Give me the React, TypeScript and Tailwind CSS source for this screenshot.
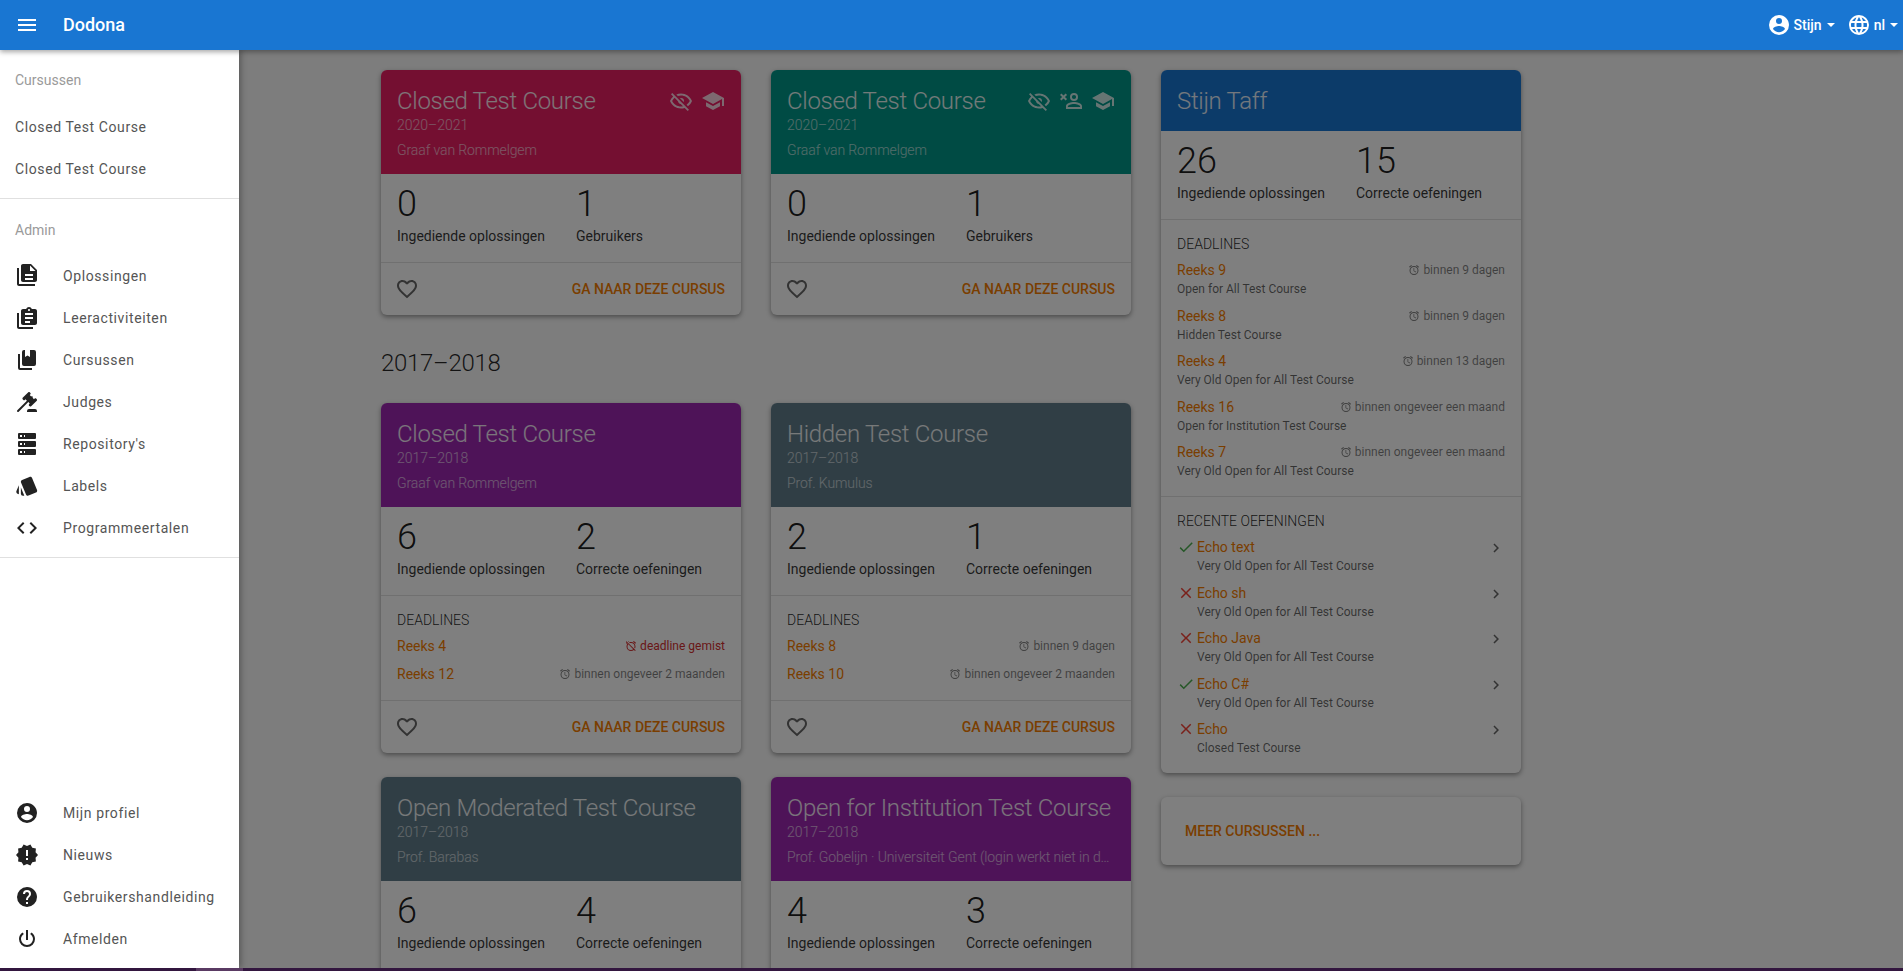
import type { ReactNode } from 'react';

const paths = {
	menu: 'M3,6H21V8H3V6M3,11H21V13H3V11M3,16H21V18H3V16Z',
	fileMultiple:
		'M16 0H8C6.9 0 6 .9 6 2V16C6 17.1 6.9 18 8 18H20C21.1 18 22 17.1 22 16V6L16 0M18 16H10V14H18V16M18 12H10V10H18V12M15 7V1.5L20.5 7H15M4 4V20H20V22H4C2.9 22 2 21.1 2 20V4H4Z',
	clipboardMultiple:
		'M4 7V21H18V23H4C2.9 23 2 22.1 2 21V7H4M20 3C21.1 3 22 3.9 22 5V17C22 18.1 21.1 19 20 19H8C6.9 19 6 18.1 6 17V5C6 3.9 6.9 3 8 3H11.18C11.6 1.84 12.7 1 14 1C15.3 1 16.4 1.84 16.82 3H20M14 3C13.45 3 13 3.45 13 4C13 4.55 13.45 5 14 5C14.55 5 15 4.55 15 4C15 3.45 14.55 3 14 3M10 7H18V9H10V7M10 11H18V13H10V11M10 15H15V17H10V15Z',
	bookMultiple:
		'M19,18H9A2,2 0 0,1 7,16V4A2,2 0 0,1 9,2H10V9L12.5,7.5L15,9V2H19A2,2 0 0,1 21,4V16A2,2 0 0,1 19,18M17,20V22H5A2,2 0 0,1 3,20V6H5V20H17Z',
	gavel:
		'M2.3,20.28L11.9,10.68L10.5,9.26L9.78,9.97C9.39,10.36 8.76,10.36 8.37,9.97L7.66,9.26C7.27,8.87 7.27,8.24 7.66,7.85L13.32,2.19C13.71,1.8 14.34,1.8 14.73,2.19L15.44,2.9C15.83,3.29 15.83,3.92 15.44,4.31L14.73,5L16.15,6.43C16.54,6.04 17.17,6.04 17.56,6.43C17.95,6.82 17.95,7.46 17.56,7.85L18.97,9.26L19.68,8.55C20.07,8.16 20.71,8.16 21.1,8.55L21.8,9.26C22.19,9.65 22.19,10.29 21.8,10.68L16.15,16.33C15.76,16.72 15.12,16.72 14.73,16.33L14.03,15.63C13.63,15.24 13.63,14.6 14.03,14.21L14.73,13.5L13.32,12.09L3.71,21.7C3.32,22.09 2.69,22.09 2.3,21.7C1.91,21.31 1.91,20.67 2.3,20.28M20,19A2,2 0 0,1 22,21V22H12V21A2,2 0 0,1 14,19H20Z',
	server:
		'M4,1H20A1,1 0 0,1 21,2V6A1,1 0 0,1 20,7H4A1,1 0 0,1 3,6V2A1,1 0 0,1 4,1M4,9H20A1,1 0 0,1 21,10V14A1,1 0 0,1 20,15H4A1,1 0 0,1 3,14V10A1,1 0 0,1 4,9M4,17H20A1,1 0 0,1 21,18V22A1,1 0 0,1 20,23H4A1,1 0 0,1 3,22V18A1,1 0 0,1 4,17M9,5H10V3H9V5M9,13H10V11H9V13M9,21H10V19H9V21M5,3V5H7V3H5M5,11V13H7V11H5M5,19V21H7V19H5Z',
	cards:
		'M21.47,4.35L20.13,3.79V12.82L22.56,6.96C22.97,5.94 22.5,4.77 21.47,4.35M1.97,8.05L6.93,20C7.24,20.77 7.97,21.24 8.74,21.26C9,21.26 9.27,21.21 9.53,21.1L16.9,18.05C17.65,17.74 18.11,17 18.13,16.26C18.14,16 18.09,15.71 18,15.45L13,3.5C12.71,2.73 11.97,2.26 11.19,2.25C10.93,2.25 10.67,2.31 10.42,2.4L3.06,5.45C2.04,5.87 1.55,7.04 1.97,8.05M18.12,4.25A2,2 0 0,0 16.12,2.25H14.67L18.12,10.59',
	codeTags:
		'M14.6,16.6L19.2,12L14.6,7.4L16,6L22,12L16,18L14.6,16.6M9.4,16.6L4.8,12L9.4,7.4L8,6L2,12L8,18L9.4,16.6Z',
	account:
		'M12,19.2C9.5,19.2 7.29,17.92 6,16C6.03,14 10,12.9 12,12.9C14,12.9 17.97,14 18,16C16.71,17.92 14.5,19.2 12,19.2M12,5A3,3 0 0,1 15,8A3,3 0 0,1 12,11A3,3 0 0,1 9,8A3,3 0 0,1 12,5M12,2A10,10 0 0,0 2,12A10,10 0 0,0 12,22A10,10 0 0,0 22,12C22,6.47 17.5,2 12,2Z',
	alertDecagram:
		'M23,12L20.56,9.22L20.9,5.54L17.29,4.72L15.4,1.54L12,3L8.6,1.54L6.71,4.72L3.1,5.53L3.44,9.21L1,12L3.44,14.78L3.1,18.47L6.71,19.29L8.6,22.47L12,21L15.4,22.46L17.29,19.28L20.9,18.46L20.56,14.78L23,12M13,17H11V15H13V17M13,13H11V7H13V13Z',
	help:
		'M15.07,11.25L14.17,12.17C13.45,12.89 13,13.5 13,15H11V14.5C11,13.39 11.45,12.39 12.17,11.67L13.41,10.41C13.78,10.05 14,9.55 14,9C14,7.89 13.1,7 12,7A2,2 0 0,0 10,9H8A4,4 0 0,1 12,5A4,4 0 0,1 16,9C16,9.88 15.64,10.67 15.07,11.25M13,19H11V17H13M12,2A10,10 0 0,0 2,12A10,10 0 0,0 12,22A10,10 0 0,0 22,12C22,6.47 17.5,2 12,2Z',
	power:
		'M16.56,5.44L15.11,6.89C16.84,7.94 18,9.83 18,12A6,6 0 0,1 12,18A6,6 0 0,1 6,12C6,9.83 7.16,7.94 8.88,6.88L7.44,5.44C5.36,6.88 4,9.28 4,12A8,8 0 0,0 12,20A8,8 0 0,0 20,12C20,9.28 18.64,6.88 16.56,5.44M13,3H11V13H13',
	web:
		'M16.36,14C16.44,13.34 16.5,12.68 16.5,12C16.5,11.32 16.44,10.66 16.36,10H19.74C19.9,10.64 20,11.31 20,12C20,12.69 19.9,13.36 19.74,14M14.59,19.56C15.19,18.45 15.65,17.25 15.97,16H18.92C17.96,17.65 16.43,18.93 14.59,19.56M14.34,14H9.66C9.56,13.34 9.5,12.68 9.5,12C9.5,11.32 9.56,10.65 9.66,10H14.34C14.43,10.65 14.5,11.32 14.5,12C14.5,12.68 14.43,13.34 14.34,14M12,19.96C11.17,18.76 10.5,17.43 10.09,16H13.91C13.5,17.43 12.83,18.76 12,19.96M8,8H5.08C6.03,6.34 7.57,5.06 9.4,4.44C8.8,5.55 8.35,6.75 8,8M5.08,16H8C8.35,17.25 8.8,18.45 9.4,19.56C7.57,18.93 6.03,17.65 5.08,16M4.26,14C4.1,13.36 4,12.69 4,12C4,11.31 4.1,10.64 4.26,10H7.64C7.56,10.66 7.5,11.32 7.5,12C7.5,12.68 7.56,13.34 7.64,14M12,4.03C12.83,5.23 13.5,6.57 13.91,8H10.09C10.5,6.57 11.17,5.23 12,4.03M18.92,8H15.97C15.65,6.75 15.19,5.55 14.59,4.44C16.43,5.07 17.96,6.34 18.92,8M12,2C6.47,2 2,6.5 2,12A10,10 0 0,0 12,22A10,10 0 0,0 22,12A10,10 0 0,0 12,2Z',
	eyeOff:
		'M2,5.27L3.28,4L20,20.72L18.73,22L15.65,18.92C14.5,19.3 13.28,19.5 12,19.5C7,19.5 2.73,16.39 1,12C1.69,10.24 2.79,8.69 4.19,7.46L2,5.27M12,9A3,3 0 0,1 15,12C15,12.35 14.94,12.69 14.83,13L11,9.17C11.31,9.06 11.65,9 12,9M12,4.5C17,4.5 21.27,7.61 23,12C22.18,14.08 20.79,15.88 19,17.19L17.58,15.76C18.94,14.82 20.06,13.54 20.82,12C19.17,8.64 15.76,6.5 12,6.5C10.91,6.5 9.84,6.68 8.84,7L7.3,5.47C8.74,4.85 10.33,4.5 12,4.5M3.18,12C4.83,15.36 8.24,17.5 12,17.5C12.69,17.5 13.37,17.43 14,17.29L11.72,15C10.29,14.85 9.15,13.71 9,12.28L5.6,8.87C4.61,9.72 3.78,10.78 3.18,12Z',
	school: 'M12,3L1,9L12,15L21,10.09V17H23V9M5,13.18V17.18L12,21L19,17.18V13.18L12,17L5,13.18Z',
	accountRemove:
		'M15,4A4,4 0 0,0 11,8A4,4 0 0,0 15,12A4,4 0 0,0 19,8A4,4 0 0,0 15,4M15,5.9A2.1,2.1 0 0,1 17.1,8A2.1,2.1 0 0,1 15,10.1A2.1,2.1 0 0,1 12.9,8A2.1,2.1 0 0,1 15,5.9M15,13C12.33,13 7,14.33 7,17V20H23V17C23,14.33 17.67,13 15,13M15,14.9C17.97,14.9 21.1,16.36 21.1,17V18.1H8.9V17C8.9,16.36 12,14.9 15,14.9M1,10.11L3.11,8L1,5.89L2.41,4.47L4.53,6.59L6.64,4.47L8.06,5.89L5.94,8L8.06,10.11L6.64,11.53L4.53,9.41L2.41,11.53L1,10.11Z',
	heart:
		'M12.1,18.55L12,18.65L11.89,18.55C7.14,14.24 4,11.39 4,8.5C4,6.5 5.5,5 7.5,5C9.04,5 10.54,6 11.07,7.36H12.93C13.46,6 14.96,5 16.5,5C18.5,5 20,6.5 20,8.5C20,11.39 16.86,14.24 12.1,18.55M16.5,3C14.76,3 13.09,3.81 12,5.08C10.91,3.81 9.24,3 7.5,3C4.42,3 2,5.41 2,8.5C2,12.27 5.4,15.36 10.55,20.03L12,21.35L13.45,20.03C18.6,15.36 22,12.27 22,8.5C22,5.41 19.58,3 16.5,3Z',
	alarm:
		'M12,20A7,7 0 0,1 5,13A7,7 0 0,1 12,6A7,7 0 0,1 19,13A7,7 0 0,1 12,20M12,4A9,9 0 0,0 3,13A9,9 0 0,0 12,22A9,9 0 0,0 21,13A9,9 0 0,0 12,4M12.5,8H11V14L15.75,16.85L16.5,15.62L12.5,13.25V8M7.88,3.39L6.6,1.86L2,5.71L3.29,7.24L7.88,3.39M22,5.72L17.4,1.86L16.11,3.39L20.71,7.25L22,5.72Z',
	alarmOff:
		'M8,3.28L6.6,1.86L5.74,2.57L7.16,4M16.47,18.39C15.26,19.39 13.7,20 12,20A7,7 0 0,1 5,13C5,11.3 5.61,9.74 6.61,8.53M2.92,2.29L1.65,3.57L3,4.9L1.87,5.83L3.29,7.25L4.4,6.31L5.2,7.11C3.83,8.69 3,10.75 3,13A9,9 0 0,0 12,22C14.25,22 16.31,21.17 17.89,19.8L20.09,22L21.36,20.73L3.89,3.27L2.92,2.29M22,5.72L17.4,1.86L16.11,3.39L20.71,7.25L22,5.72M12,6A7,7 0 0,1 19,13C19,13.84 18.84,14.65 18.57,15.4L20.09,16.92C20.67,15.73 21,14.41 21,13A9,9 0 0,0 12,4C10.59,4 9.27,4.33 8.08,4.91L9.6,6.43C10.35,6.16 11.16,6 12,6Z',
	check: 'M21,7L9,19L3.5,13.5L4.91,12.09L9,16.17L19.59,5.59L21,7Z',
	close:
		'M19,6.41L17.59,5L12,10.59L6.41,5L5,6.41L10.59,12L5,17.59L6.41,19L12,13.41L17.59,19L19,17.59L13.41,12L19,6.41Z',
	chevron: 'M8.59,16.58L13.17,12L8.59,7.41L10,6L16,12L10,18L8.59,16.58Z',
};

type IconName = keyof typeof paths;

function Icon({ name, className = 'h-6 w-6' }: { name: IconName; className?: string }) {
	return (
		<svg viewBox="0 0 24 24" fill="currentColor" fillRule="evenodd" className={`shrink-0 ${className}`}>
			<path d={paths[name]} />
		</svg>
	);
}

const adminLinks: { icon: IconName; label: string; flip?: boolean }[] = [
	{ icon: 'fileMultiple', label: 'Oplossingen' },
	{ icon: 'clipboardMultiple', label: 'Leeractiviteiten' },
	{ icon: 'bookMultiple', label: 'Cursussen' },
	{ icon: 'gavel', label: 'Judges' },
	{ icon: 'server', label: "Repository's" },
	{ icon: 'cards', label: 'Labels', flip: true },
	{ icon: 'codeTags', label: 'Programmeertalen' },
];

const footerLinks: { icon: IconName; label: string }[] = [
	{ icon: 'account', label: 'Mijn profiel' },
	{ icon: 'alertDecagram', label: 'Nieuws' },
	{ icon: 'help', label: 'Gebruikershandleiding' },
	{ icon: 'power', label: 'Afmelden' },
];

function DrawerLink({ icon, label, flip }: { icon?: IconName; label: string; flip?: boolean }) {
	return (
		<div className="flex h-[42px] items-center px-[15px] text-sm tracking-[0.6px] text-[#555555]">
			{icon && (
				<span className="mr-6 text-[#222222]">
					<Icon name={icon} className={flip ? 'h-6 w-6 rotate-180' : 'h-6 w-6'} />
				</span>
			)}
			{label}
		</div>
	);
}

function Drawer() {
	return (
		<aside className="absolute bottom-[3px] left-0 top-[50px] z-10 flex w-[239px] flex-col bg-white shadow-[2px_0_6px_rgba(0,0,0,0.3)]">
			<div className="flex h-[56px] items-end pb-4 pl-[15px] text-sm leading-5 text-[#9a9a9a]">Cursussen</div>
			<DrawerLink label="Closed Test Course" />
			<DrawerLink label="Closed Test Course" />
			<div className="mt-2 border-b border-[#e0e0e0]" />
			<div className="flex h-[46px] items-end pb-[5px] pl-[15px] text-sm leading-5 text-[#9a9a9a]">Admin</div>
			<div className="pt-[10px]">
				{adminLinks.map((link) => (
					<DrawerLink key={link.label} {...link} />
				))}
			</div>
			<div className="mt-2 border-b border-[#e0e0e0]" />
			<div className="mt-auto pb-2">
				{footerLinks.map((link) => (
					<DrawerLink key={link.label} {...link} />
				))}
			</div>
		</aside>
	);
}

function Caret() {
	return <span className="ml-[5px] h-0 w-0 border-x-4 border-t-4 border-x-transparent border-t-white" />;
}

function Navbar() {
	return (
		<header className="relative z-20 flex h-[50px] shrink-0 items-center bg-[#1976d2] pl-[15px] pr-[5px] text-white shadow-[0_2px_5px_rgba(0,0,0,0.35)]">
			<Icon name="menu" />
			<span className="ml-6 text-lg font-medium">Dodona</span>
			<div className="ml-auto flex items-center text-sm font-medium">
				<Icon name="account" />
				<span className="ml-[3px]">Stijn</span>
				<Caret />
				<span className="ml-3">
					<Icon name="web" />
				</span>
				<span className="ml-[3px]">nl</span>
				<Caret />
			</div>
		</header>
	);
}

function CardShell({ children }: { children: ReactNode }) {
	return (
		<section className="overflow-hidden rounded-[6px] bg-white shadow-[0_2px_5px_rgba(0,0,0,0.4)]">{children}</section>
	);
}

function Stats({ stats }: { stats: [string, string][] }) {
	return (
		<div className="flex px-4 pb-4 pt-[10px]">
			{stats.map(([value, label]) => (
				<div key={label} className="w-[179px] shrink-0">
					<div className="text-[36px] font-light leading-10 text-black/90">{value}</div>
					<div className="mt-[2px] text-sm leading-5 text-black/80">{label}</div>
				</div>
			))}
		</div>
	);
}

type Deadline = { name: string; time: string; missed?: boolean };

function TimeLabel({ time, missed }: { time: string; missed?: boolean }) {
	return (
		<span className={`flex items-center gap-[3px] text-xs ${missed ? 'text-[#d32f2f]' : 'text-black/50'}`}>
			<Icon name={missed ? 'alarmOff' : 'alarm'} className="h-3 w-3" />
			{time}
		</span>
	);
}

type Course = {
	title: string;
	year: string;
	teacher: string;
	header: string;
	icons?: IconName[];
	stats: [string, string][];
	deadlines?: Deadline[];
	belowFold?: boolean;
};

function CourseCard({ course }: { course: Course }) {
	return (
		<CardShell>
			<div className={`h-[104px] px-4 pt-4 ${course.header}`}>
				<div className="flex h-[30px] items-center">
					<h2 className="min-w-0 truncate text-2xl font-light leading-[30px] tracking-[-0.3px] text-white/90">
						{course.title}
					</h2>
					<div className="-mt-px ml-auto flex gap-2 text-white/80">
						{course.icons?.map((icon) => (
							<Icon key={icon} name={icon} />
						))}
					</div>
				</div>
				<div className="text-sm font-light leading-[18px] text-white/65">{course.year}</div>
				<div className="mt-[6px] truncate text-sm font-light leading-5 tracking-[-0.1px] text-white/65">
					{course.teacher}
				</div>
			</div>
			<Stats stats={course.stats} />
			{course.deadlines && (
				<div className="border-t border-[#e0e0e0] px-4 pb-3 pt-3">
					<div className="flex h-6 items-center text-sm font-light text-black/85">DEADLINES</div>
					{course.deadlines.map((deadline) => (
						<div key={deadline.name} className="flex h-7 items-center justify-between">
							<span className="text-sm text-[#f57c00]">{deadline.name}</span>
							<TimeLabel time={deadline.time} missed={deadline.missed} />
						</div>
					))}
				</div>
			)}
			<div className="flex h-[53px] items-center justify-between border-t border-[#e0e0e0] px-4 pb-px">
				<span className="-ml-[2px] text-black/60">
					<Icon name="heart" />
				</span>
				{!course.belowFold && <span className="text-sm font-medium text-[#f57c00]">GA NAAR DEZE CURSUS</span>}
			</div>
		</CardShell>
	);
}

const solvedStats = (submitted: string, correct: string): [string, string][] => [
	[submitted, 'Ingediende oplossingen'],
	[correct, 'Correcte oefeningen'],
];

const userStats = (): [string, string][] => [
	['0', 'Ingediende oplossingen'],
	['1', 'Gebruikers'],
];

const currentCourses: Course[] = [
	{
		title: 'Closed Test Course',
		year: '2020–2021',
		teacher: 'Graaf van Rommelgem',
		header: 'bg-[#e91e63]',
		icons: ['eyeOff', 'school'],
		stats: userStats(),
	},
	{
		title: 'Closed Test Course',
		year: '2020–2021',
		teacher: 'Graaf van Rommelgem',
		header: 'bg-[#009688]',
		icons: ['eyeOff', 'accountRemove', 'school'],
		stats: userStats(),
	},
];

const olderCourses: Course[] = [
	{
		title: 'Closed Test Course',
		year: '2017–2018',
		teacher: 'Graaf van Rommelgem',
		header: 'bg-[#9c27b0]',
		stats: solvedStats('6', '2'),
		deadlines: [
			{ name: 'Reeks 4', time: 'deadline gemist', missed: true },
			{ name: 'Reeks 12', time: 'binnen ongeveer 2 maanden' },
		],
	},
	{
		title: 'Hidden Test Course',
		year: '2017–2018',
		teacher: 'Prof. Kumulus',
		header: 'bg-[#607d8b]',
		stats: solvedStats('2', '1'),
		deadlines: [
			{ name: 'Reeks 8', time: 'binnen 9 dagen' },
			{ name: 'Reeks 10', time: 'binnen ongeveer 2 maanden' },
		],
	},
	{
		title: 'Open Moderated Test Course',
		year: '2017–2018',
		teacher: 'Prof. Barabas',
		header: 'bg-[#607d8b]',
		stats: solvedStats('6', '4'),
		belowFold: true,
	},
	{
		title: 'Open for Institution Test Course',
		year: '2017–2018',
		teacher: 'Prof. Gobelijn · Universiteit Gent (login werkt niet in de testomgeving)',
		header: 'bg-[#9c27b0]',
		stats: solvedStats('4', '3'),
		belowFold: true,
	},
];

const upcoming = [
	{ name: 'Reeks 9', time: 'binnen 9 dagen', course: 'Open for All Test Course' },
	{ name: 'Reeks 8', time: 'binnen 9 dagen', course: 'Hidden Test Course' },
	{ name: 'Reeks 4', time: 'binnen 13 dagen', course: 'Very Old Open for All Test Course' },
	{ name: 'Reeks 16', time: 'binnen ongeveer een maand', course: 'Open for Institution Test Course' },
	{ name: 'Reeks 7', time: 'binnen ongeveer een maand', course: 'Very Old Open for All Test Course' },
];

const recent = [
	{ name: 'Echo text', ok: true, course: 'Very Old Open for All Test Course' },
	{ name: 'Echo sh', ok: false, course: 'Very Old Open for All Test Course' },
	{ name: 'Echo Java', ok: false, course: 'Very Old Open for All Test Course' },
	{ name: 'Echo C#', ok: true, course: 'Very Old Open for All Test Course' },
	{ name: 'Echo', ok: false, course: 'Closed Test Course' },
];

function ProfileCard() {
	return (
		<CardShell>
			<div className="h-[61px] bg-[#1976d2] px-4 pt-4">
				<h2 className="text-2xl font-light leading-[30px] tracking-[-0.3px] text-white/90">Stijn Taff</h2>
			</div>
			<Stats stats={solvedStats('26', '15')} />
			<div className="border-t border-[#e0e0e0] px-4 pb-2 pt-3">
				<div className="flex h-6 items-center text-sm font-light text-black/85">DEADLINES</div>
				<div className="pt-1">
					{upcoming.map((item) => (
						<div key={item.name} className="h-[45.5px]">
							<div className="flex h-5 items-center justify-between">
								<span className="text-sm text-[#f57c00]">{item.name}</span>
								<TimeLabel time={item.time} />
							</div>
							<div className="text-xs leading-[18px] text-black/60">{item.course}</div>
						</div>
					))}
				</div>
			</div>
			<div className="border-t border-[#e0e0e0] px-4 pb-[8.5px] pt-3">
				<div className="flex h-6 items-center text-sm font-light text-black/85">RECENTE OEFENINGEN</div>
				<div className="pt-[4.5px]">
					{recent.map((item) => (
						<div key={item.name} className="flex h-[45.5px] items-start">
							<span className={`mt-px w-5 ${item.ok ? 'text-[#4caf50]' : 'text-[#f44336]'}`}>
								<Icon name={item.ok ? 'check' : 'close'} className="h-[18px] w-[18px]" />
							</span>
							<div>
								<div className="text-sm leading-5 text-[#f57c00]">{item.name}</div>
								<div className="text-xs leading-[18px] text-black/60">{item.course}</div>
							</div>
							<span className="ml-auto mt-[2px] text-black/60">
								<Icon name="chevron" className="h-[18px] w-[18px]" />
							</span>
						</div>
					))}
				</div>
			</div>
		</CardShell>
	);
}

export default function App() {
	return (
		<div className="relative flex h-screen flex-col overflow-hidden bg-[#fafafa] font-['Roboto',sans-serif]">
			<Navbar />
			<Drawer />
			{/* backdrop of the open drawer, dims the whole page below the navbar */}
			<div className="absolute bottom-[3px] left-0 right-0 top-[50px] z-[5] bg-black/50" />
			<main className="ml-[366px] flex min-h-0 w-[1170px] flex-1 items-start gap-[30px] overflow-hidden px-[15px] pt-5">
				<div className="grid w-[750px] shrink-0 grid-cols-2 content-start gap-x-[30px] gap-y-6">
					{currentCourses.map((course, index) => (
						<CourseCard key={index} course={course} />
					))}
					<h3 className="col-span-2 mt-2 text-2xl font-light leading-8 tracking-[-0.3px] text-black/85">2017–2018</h3>
					{olderCourses.map((course) => (
						<CourseCard key={course.title} course={course} />
					))}
				</div>
				<div className="flex w-[360px] shrink-0 flex-col gap-6">
					<ProfileCard />
					<CardShell>
						<div className="flex h-[68px] items-center px-6 text-sm font-medium text-[#f57c00]">MEER CURSUSSEN ...</div>
					</CardShell>
				</div>
			</main>
			<div className="relative z-10 flex h-[3px] shrink-0 bg-[#33163f]">
				<div className="ml-[196px] w-[47px] bg-[#5a3a63]" />
			</div>
		</div>
	);
}
